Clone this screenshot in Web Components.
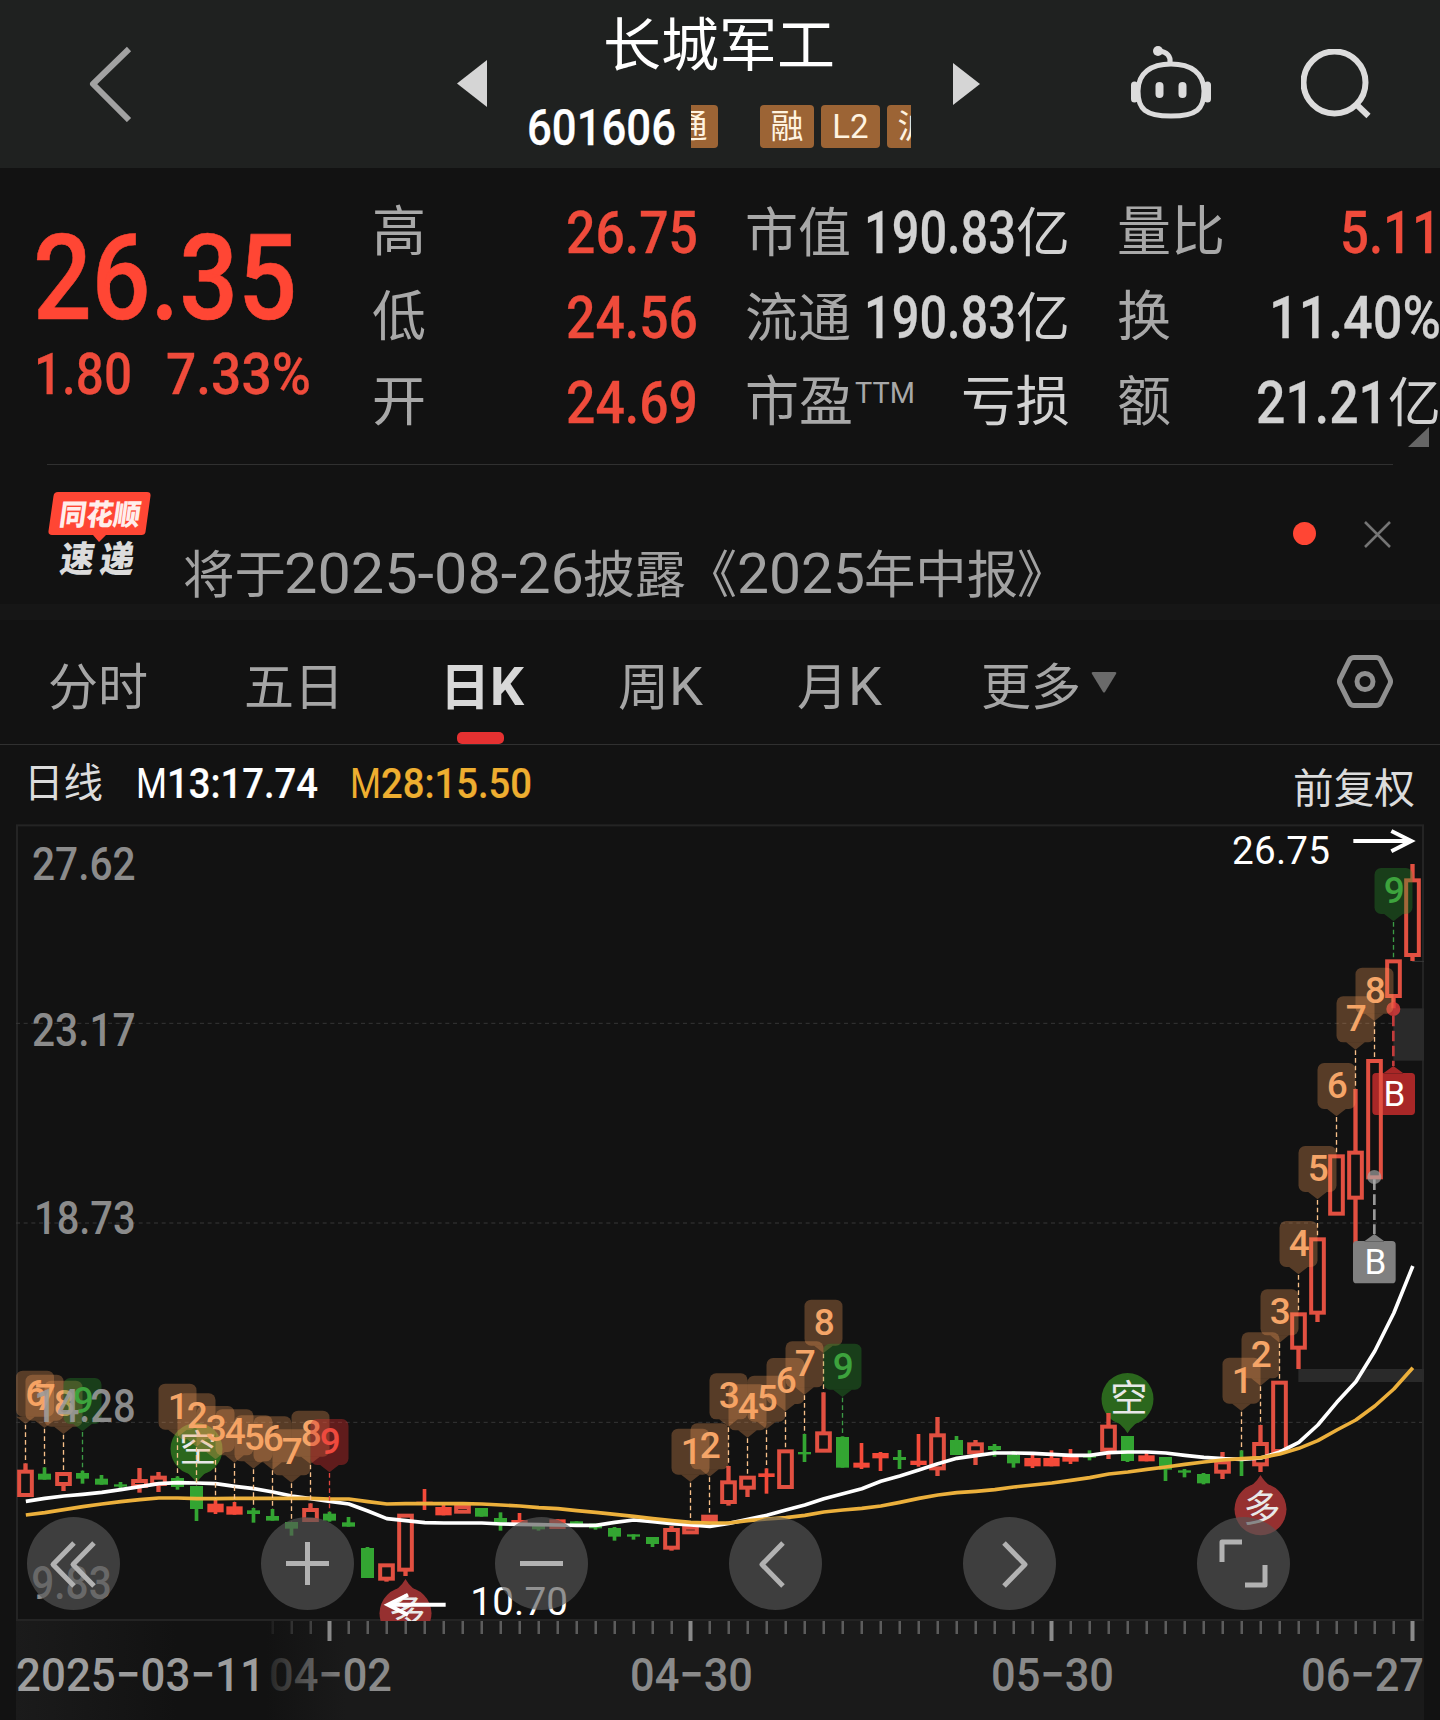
<!DOCTYPE html>
<html lang="zh-CN">
<head>
<meta charset="utf-8">
<title>长城军工 601606</title>
<style>
body {
    margin: 0;
    background: #121212;
    font-family: Roboto, "Noto Sans CJK SC", sans-serif;
}
</style>
</head>
<body>
<stock-app></stock-app>

<script>
const FONT = 'Roboto, "Noto Sans CJK SC", sans-serif';

// Text stretched to a given width; the box is as tall as the capitals.
class FitText extends HTMLElement {
    connectedCallback() {
        const w = Number(this.getAttribute('w'));
        const size = Number(this.getAttribute('size'));
        const weight = this.getAttribute('weight') || 400;
        const cap = size * 0.711;
        const cjk = /[\u4e00-\u9fff]/.test(this.textContent);
        const outline = weight === '500' ? `stroke="currentColor" stroke-width="${size * 0.005}"` : '';
        this.attachShadow({ mode: 'open' }).innerHTML = `
        <style>
        :host {
            display: block;
            flex: none;
            width: ${w}px;
            height: ${cap}px;
        }
        svg {
            display: block;
            overflow: visible;
        }
        </style>
        <svg width="${w}" height="${cap}"><text y="${cjk ? cap + 1 : cap}" fill="currentColor" ${outline} font-size="${size}" font-weight="${weight}" textLength="${w}" lengthAdjust="spacingAndGlyphs">${this.textContent}</text></svg>
        `;
    }
}

class StockBadge extends HTMLElement {
    constructor() {
        super();
        this.attachShadow({ mode: 'open' }).innerHTML = `
        <style>
        :host {
            display: flex;
            flex: none;
            align-items: center;
            justify-content: center;
            width: 54px;
            height: 43px;
            border-radius: 4px;
            background: #9c6435;
            color: #fff3e0;
            font-size: 33px;
            line-height: 43px;
        }
        </style>
        <slot></slot>
        `;
    }
}

class StockHeader extends HTMLElement {
    constructor() {
        super();
        this.attachShadow({ mode: 'open' }).innerHTML = `
        <style>
        :host {
            display: flex;
            box-sizing: border-box;
            height: 168px;
            padding-left: 89px;
            background: #1f2120;
            color: #fff;
        }
        svg { display: block; flex: none; }
        .back { margin: 46px 325px 0 0; }
        .prev { margin: 60px 40px 0 0; }
        .next { margin: 63px 151px 0 42px; }
        .robot { margin: 45px 90px 0 0; }
        .search { margin-top: 49px; }
        .center {
            display: flex;
            flex-direction: column;
            width: 384px;
        }
        .name {
            height: 84px;
            margin-top: 4px;
            text-align: center;
            font-size: 58px;
            line-height: 84px;
        }
        .row {
            display: flex;
            align-items: center;
            height: 43px;
            margin-top: 17px;
        }
        .badges {
            display: flex;
            width: 220px;
            margin-left: 15px;
            overflow: hidden;
        }
        .cut { margin: 0 42px 0 -27px; }
        .wide { width: 59px; margin: 0 7px; }
        .wide, .cut { flex: none; }
        </style>
        <svg class="back" width="43" height="76" fill="none" stroke="#a2a2a2" stroke-width="6"><path d="M40 3 4 38l36 36" stroke-linejoin="round"/></svg>
        <svg class="prev" width="30" height="47"><path d="M30 0v47L0 23.500z" fill="#d5d5d5"/></svg>
        <div class="center">
            <div class="name">长城军工</div>
            <div class="row">
                <fit-text w="149" size="50" weight="500">601606</fit-text>
                <div class="badges">
                    <stock-badge class="cut">通</stock-badge>
                    <stock-badge>融</stock-badge>
                    <stock-badge class="wide">L2</stock-badge>
                    <stock-badge>沪</stock-badge>
                </div>
            </div>
        </div>
        <svg class="next" width="27" height="43"><path d="M0 0v42l27-21z" fill="#d5d5d5"/></svg>
        <svg class="robot" width="80" height="75" fill="none" stroke="#dcdcdc" stroke-width="5">
            <path d="M40 19C60 19 73 28 73 46S66 71 40 71 7 64 7 46 20 19 40 19z"/>
            <path d="M39 18C40 11 36 7 28 6" />
            <circle cx="27" cy="6" r="5" fill="#dcdcdc" stroke="none"/>
            <path d="M3.500 40v14M76.500 40v14" stroke-width="7" stroke-linecap="round"/>
            <path d="M28.500 41v8M51.500 41v8" stroke-width="8" stroke-linecap="round"/>
        </svg>
        <svg class="search" width="70" height="70" fill="none" stroke="#dcdcdc" stroke-width="6">
            <circle cx="33.500" cy="33.500" r="31"/>
            <path d="M55.500 55.500 67.500 67"/>
        </svg>
        `;
    }
}

// One label / value pair. The value goes into the default slot.
class QuoteCell extends HTMLElement {
    constructor() {
        super();
        this.attachShadow({ mode: 'open' }).innerHTML = `
        <style>
        :host {
            display: flex;
            align-items: center;
            justify-content: space-between;
            height: 85px;
            color: #d2d2d2;
        }
        .label, .value {
            display: flex;
            align-items: center;
        }
        .label { color: #a8a8a8; }
        :host([up]) .value { color: #ef4b3b; }
        </style>
        <div class="label"><slot name="label"></slot></div>
        <div class="value"><slot></slot></div>
        `;
    }
}

class QuotePanel extends HTMLElement {
    constructor() {
        super();
        this.attachShadow({ mode: 'open' }).innerHTML = `
        <style>
        :host {
            display: grid;
            grid-template-columns: 292px 326px 325px 324px;
            column-gap: 47px;
            position: relative;
            box-sizing: border-box;
            height: 297px;
            padding: 21px 0 0 33px;
        }
        .price { color: #ff4634; padding-top: 46px; }
        .change {
            display: flex;
            gap: 34px;
            margin: 34px 0 0 1px;
            color: #ef4b3b;
        }
        .ttm { margin: -18px 0 0 2px; }
        .rule {
            position: absolute;
            left: 47px;
            right: 47px;
            bottom: 0;
            height: 1px;
            background: #303030;
        }
        .corner {
            position: absolute;
            right: 11px;
            bottom: 18px;
        }
        </style>
        <div class="price">
            <fit-text w="264" size="118" weight="500">26.35</fit-text>
            <div class="change">
                <fit-text w="98" size="58" weight="500">1.80</fit-text>
                <fit-text w="145" size="58" weight="500">7.33%</fit-text>
            </div>
        </div>
        <div>
            <quote-cell up><fit-text slot="label" w="54" size="54">高</fit-text><fit-text w="132" size="59" weight="500">26.75</fit-text></quote-cell>
            <quote-cell up><fit-text slot="label" w="54" size="54">低</fit-text><fit-text w="132" size="59" weight="500">24.56</fit-text></quote-cell>
            <quote-cell up><fit-text slot="label" w="54" size="54">开</fit-text><fit-text w="132" size="59" weight="500">24.69</fit-text></quote-cell>
        </div>
        <div>
            <quote-cell><fit-text slot="label" w="106" size="53">市值</fit-text><fit-text w="152" size="59" weight="500">190.83</fit-text><fit-text w="54" size="53">亿</fit-text></quote-cell>
            <quote-cell><fit-text slot="label" w="106" size="53">流通</fit-text><fit-text w="152" size="59" weight="500">190.83</fit-text><fit-text w="54" size="53">亿</fit-text></quote-cell>
            <quote-cell><fit-text slot="label" w="108" size="54">市盈</fit-text><fit-text slot="label" class="ttm" w="60" size="29">TTM</fit-text><fit-text w="109" size="54">亏损</fit-text></quote-cell>
        </div>
        <div>
            <quote-cell up><fit-text slot="label" w="108" size="54">量比</fit-text><fit-text w="101" size="59" weight="500">5.11</fit-text></quote-cell>
            <quote-cell><fit-text slot="label" w="54" size="54">换</fit-text><fit-text w="172" size="59" weight="500">11.40%</fit-text></quote-cell>
            <quote-cell><fit-text slot="label" w="54" size="54">额</fit-text><fit-text w="132" size="59" weight="500">21.21</fit-text><fit-text w="53" size="53">亿</fit-text></quote-cell>
        </div>
        <svg class="corner" width="21" height="20"><path d="M21 0v20H0z" fill="#666"/></svg>
        <div class="rule"></div>
        `;
    }
}

class NewsStrip extends HTMLElement {
    constructor() {
        super();
        this.attachShadow({ mode: 'open' }).innerHTML = `
        <style>
        :host {
            display: flex;
            box-sizing: border-box;
            height: 155px;
            padding: 27px 49px 0 48px;
            border-bottom: 16px solid #161616;
            font-family: ${FONT};
        }
        svg { display: block; flex: none; overflow: visible; }
        .line { margin: 53px 250px 0 34px; }
        .dot {
            flex: none;
            width: 23px;
            height: 23px;
            margin: 30px 48px 0 0;
            border-radius: 50%;
            background: #ff4634;
        }
        .close { margin-top: 29px; }
        </style>
        <svg width="103" height="88">
            <path d="M10 0h89q4 0 3.500 4l-5 36q-.5 3-4 3H58l-7 7-6-7H4q-4 0-3.500-4l5-35q.5-4 4.500-4z" fill="#ff4634"/>
            <g transform="skewX(-8)" font-weight="900">
                <text x="15" y="33" font-size="29" textLength="81" lengthAdjust="spacingAndGlyphs" fill="#ffeeec">同花顺</text>
                <text x="22" y="80" font-size="36" textLength="34" lengthAdjust="spacingAndGlyphs" fill="#dcdcdc">速</text>
                <text x="62" y="80" font-size="36" textLength="34" lengthAdjust="spacingAndGlyphs" fill="#dcdcdc">递</text>
            </g>
        </svg>
        <svg class="line" width="858" height="52" fill="#a2a2a2" font-size="51">
            <text y="47.500"><tspan x="-2" textLength="103" lengthAdjust="spacingAndGlyphs">将于</tspan><tspan x="99" font-size="55" textLength="300" lengthAdjust="spacingAndGlyphs">2025-08-26</tspan><tspan x="398" textLength="103" lengthAdjust="spacingAndGlyphs">披露</tspan><tspan x="501">《</tspan><tspan x="552" font-size="55" textLength="128" lengthAdjust="spacingAndGlyphs">2025</tspan><tspan x="679" textLength="154" lengthAdjust="spacingAndGlyphs">年中报</tspan><tspan x="832">》</tspan></text>
        </svg>
        <div class="dot"></div>
        <svg class="close" width="27" height="27" stroke="#757575" stroke-width="2.500"><path d="M1 1l25 25M26 1 1 26"/></svg>
        `;
    }
}

class PeriodTab extends HTMLElement {
    constructor() {
        super();
        this.attachShadow({ mode: 'open' }).innerHTML = `
        <style>
        :host {
            display: flex;
            flex: none;
            flex-direction: column;
            align-items: center;
            justify-content: space-between;
            height: 124px;
            color: #a5a5a5;
        }
        .label {
            display: flex;
            align-items: center;
            height: 38px;
            padding-top: 47px;
        }
        .bar { width: 47px; height: 12px; margin-right: 4px; border-radius: 5px; }
        :host([active]) { color: #d8d8d8; }
        :host([active]) .bar { background: #e53131; }
        </style>
        <div class="label"><slot></slot></div>
        <div class="bar"></div>
        `;
    }
}

class PeriodTabs extends HTMLElement {
    constructor() {
        super();
        this.attachShadow({ mode: 'open' }).innerHTML = `
        <style>
        :host {
            display: flex;
            align-items: flex-start;
            height: 124px;
            padding-left: 48px;
            border-bottom: 1px solid #303030;
        }
        .arrow { margin: -8px 0 0 10px; }
        .gear { display: block; margin: 35px 0 0 220px; }
        </style>
        <period-tab><fit-text w="100" size="50">分时</fit-text></period-tab>
        <period-tab style="margin-left: 96px"><fit-text w="100" size="50">五日</fit-text></period-tab>
        <period-tab style="margin-left: 96px" active><fit-text w="50" size="50" weight="700">日</fit-text><fit-text w="34" size="54" weight="700">K</fit-text></period-tab>
        <period-tab style="margin-left: 94px"><fit-text w="51" size="50">周</fit-text><fit-text w="34" size="54">K</fit-text></period-tab>
        <period-tab style="margin-left: 94px"><fit-text w="51" size="50">月</fit-text><fit-text w="34" size="54">K</fit-text></period-tab>
        <period-tab style="margin-left: 99px"><fit-text w="100" size="50">更多</fit-text><svg class="arrow" width="26" height="21"><path d="M2 0h22q2 0 1 2L14 20q-1 1-2 0L1 2q-1-2 1-2z" fill="#6a6a6a"/></svg></period-tab>
        <svg class="gear" width="56" height="53" fill="none" stroke="#8f8f8f" stroke-width="5">
            <path d="M17 2.500h22q3 0 4.500 2.500l9 18q2 3.500 0 7l-9 18q-1.500 2.500-4.500 2.500H17q-3 0-4.500-2.500l-9-18q-2-3.500 0-7l9-18Q14 2.500 17 2.500z"/>
            <circle cx="28" cy="26.500" r="8"/>
        </svg>
        `;
    }
}

class IndicatorBar extends HTMLElement {
    constructor() {
        super();
        this.attachShadow({ mode: 'open' }).innerHTML = `
        <style>
        :host {
            display: flex;
            align-items: flex-start;
            box-sizing: border-box;
            height: 79px;
            padding: 23px 25px 0 24px;
            color: #fff;
        }
        .name { margin-right: 33px; color: #dcdcdc; }
        .m28 { display: flex; margin-left: 32px; color: #eeae30; }
        .adj { margin: 5px 0 0 auto; color: #dcdcdc; }
        </style>
        <fit-text class="name" w="79" size="40">日线</fit-text>
        <fit-text w="31" size="42">M</fit-text><fit-text w="151" size="42" weight="500">13:17.74</fit-text>
        <div class="m28"><fit-text w="31" size="42">M</fit-text><fit-text w="151" size="42" weight="500">28:15.50</fit-text></div>
        <fit-text class="adj" w="122" size="41">前复权</fit-text>
        `;
    }
}

// Chart units are a third of a pixel, measured from the top left of the plot.
const STEP = 57;
const candleX = i => 76.5 + i * STEP;

// kind (h = hollow red, f = filled red, g = green), body top, body bottom, high, low
const CANDLES = [
    ['h', 1938, 2018, 1918, 2018], ['g', 1949, 1967, 1930, 1967], ['h', 1945, 1985, 1945, 2001],
    ['g', 1947, 1964, 1940, 1979], ['g', 1964, 1982, 1953, 1982], ['g', 1981, 1988, 1974, 1995],
    ['h', 1966, 1991, 1932, 2006], ['h', 1956, 1985, 1944, 2004], ['g', 1962, 1989, 1957, 1997],
    ['g', 1986, 2055, 1986, 2091], ['f', 2039, 2065, 2024, 2070], ['f', 2047, 2072, 2034, 2072],
    ['g', 2059, 2070, 2052, 2096], ['g', 2076, 2090, 2055, 2090], ['g', 2094, 2114, 2094, 2135],
    ['h', 2053, 2093, 2038, 2093], ['g', 2069, 2090, 2063, 2093], ['g', 2095, 2108, 2079, 2108],
    ['g', 2172, 2262, 2169, 2262], ['h', 2219, 2269, 2219, 2273], ['h', 2070, 2242, 2070, 2256],
    ['f', 2033, 2042, 1995, 2058], ['f', 2049, 2074, 2041, 2074], ['h', 2044, 2068, 2044, 2068],
    ['g', 2052, 2078, 2052, 2078], ['g', 2082, 2096, 2065, 2120], ['f', 2088, 2101, 2067, 2101],
    ['g', 2106, 2116, 2106, 2120], ['f', 2086, 2115, 2086, 2115], ['g', 2092, 2101, 2092, 2101],
    ['g', 2099, 2113, 2099, 2117], ['g', 2112, 2138, 2109, 2150], ['g', 2131, 2138, 2131, 2147],
    ['g', 2139, 2160, 2139, 2169], ['h', 2113, 2176, 2106, 2180], ['h', 2106, 2130, 2092, 2130],
    ['h', 2073, 2093, 2073, 2093], ['h', 1970, 2039, 1926, 2045], ['h', 1956, 1996, 1956, 2019],
    ['f', 1948, 1959, 1933, 2009], ['h', 1877, 1994, 1877, 1994], ['g', 1884, 1891, 1830, 1914],
    ['h', 1823, 1885, 1705, 1885], ['g', 1839, 1931, 1837, 1931], ['f', 1916, 1931, 1857, 1935],
    ['f', 1887, 1903, 1884, 1941], ['g', 1899, 1908, 1878, 1935], ['f', 1910, 1923, 1830, 1928],
    ['h', 1829, 1938, 1779, 1956], ['g', 1848, 1893, 1836, 1893], ['h', 1856, 1890, 1848, 1923],
    ['g', 1866, 1878, 1860, 1898], ['g', 1893, 1918, 1881, 1931], ['f', 1902, 1927, 1891, 1932],
    ['f', 1902, 1927, 1879, 1927], ['f', 1891, 1913, 1875, 1920], ['g', 1893, 1901, 1879, 1909],
    ['h', 1803, 1882, 1767, 1905], ['g', 1836, 1911, 1836, 1914], ['f', 1894, 1912, 1886, 1912],
    ['g', 1899, 1937, 1899, 1971], ['g', 1939, 1946, 1935, 1960], ['g', 1950, 1978, 1947, 1981],
    ['h', 1910, 1948, 1884, 1965], ['g', 1904, 1906, 1879, 1956], ['h', 1855, 1926, 1803, 1944],
    ['h', 1671, 1886, 1671, 1886], ['h', 1466, 1576, 1466, 1635], ['h', 1241, 1471, 1241, 1494],
    ['h', 992, 1174, 992, 1174], ['h', 981, 1126, 795, 1268], ['h', 706, 1065, 706, 1065],
    ['h', 407, 521, 407, 553], ['h', 164, 398, 120, 411]
];

const MA13 = [
    2032, 2023, 2016, 2011, 2005, 1997, 1988, 1979, 1976, 1977, 1979, 1987, 1994, 2004, 2016,
    2024, 2032, 2040, 2061, 2084, 2090, 2096, 2097, 2097, 2097, 2100, 2101, 2102, 2103, 2104,
    2104, 2095, 2088, 2093, 2099, 2103, 2107, 2098, 2086, 2074, 2058, 2043, 2024, 2009, 1994,
    1972, 1956, 1938, 1919, 1903, 1895, 1887, 1887, 1888, 1891, 1894, 1894, 1886, 1884, 1884,
    1887, 1894, 1900, 1904, 1906, 1902, 1884, 1855, 1803, 1735, 1673, 1581, 1467, 1326
];

const MA28 = [
    2073, 2066, 2057, 2048, 2040, 2033, 2027, 2022, 2022, 2024, 2024, 2023, 2023, 2023, 2023,
    2023, 2025, 2025, 2033, 2040, 2039, 2039, 2039, 2039, 2040, 2043, 2046, 2051, 2054, 2060,
    2065, 2071, 2077, 2084, 2090, 2095, 2097, 2097, 2090, 2085, 2081, 2074, 2064, 2058, 2053,
    2046, 2035, 2023, 2013, 2006, 2002, 1997, 1989, 1983, 1977, 1969, 1961, 1950, 1944, 1936,
    1929, 1921, 1914, 1908, 1904, 1901, 1890, 1873, 1850, 1818, 1788, 1746, 1695, 1631
];

// candle index, digit, colour set
const TAGS = [
    [0, 6], [1, 7], [2, 8], [3, 9, 'green'],
    [8, 1], [9, 2], [10, 3], [11, 4], [12, 5], [13, 6], [14, 7], [15, 8], [16, 9, 'red'],
    [35, 1], [36, 2], [37, 3], [38, 4], [39, 5], [40, 6], [41, 7], [42, 8], [43, 9, 'green'],
    [64, 1], [65, 2], [66, 3], [67, 4], [68, 5], [69, 6], [70, 7], [71, 8], [72, 9, 'green']
];

const TAG_COLORS = {
    orange: ['rgba(247, 159, 91, .3)', '#f5a568', '#f8c08a'],
    green: ['rgba(40, 150, 45, .34)', '#3da33d', '#3b9a45'],
    red: ['rgba(215, 45, 45, .4)', '#ee4a3e', '#e0453d']
};

class KlineChart extends HTMLElement {
    constructor() {
        super();
        this.attachShadow({ mode: 'open' });
    }

    connectedCallback() {
        this.render();
    }

    candle([kind, top, bottom, high, low], i) {
        const x = candleX(i);
        const color = kind === 'g' ? '#33a532' : '#e25041';
        let out = '';
        if (kind === 'h') {
            out += `<rect x="${x - 19}" y="${top + 5}" width="38" height="${Math.max(bottom - top - 10, 2)}" fill="none" stroke="${color}" stroke-width="12"/>`;
            if (high < top) out += `<rect x="${x - 6.5}" y="${high}" width="13" height="${top - high + 2}" fill="${color}"/>`;
            if (low > bottom) out += `<rect x="${x - 6.5}" y="${bottom - 2}" width="13" height="${low - bottom + 2}" fill="${color}"/>`;
            return out;
        }
        const half = kind === 'g' ? 19.5 : 24.5;
        const fill = kind === 'g' ? color : '#f44a39';
        if (bottom - top > 3) out += `<rect x="${x - half}" y="${top}" width="${half * 2}" height="${bottom - top}" fill="${fill}"/>`;
        out += `<rect x="${x - 5.5}" y="${high}" width="11" height="${low - high}" fill="${fill}"/>`;
        return out;
    }

    average(values, color) {
        const points = values.map((y, i) => `${candleX(i) + 1},${y}`).join(' ');
        return `<polyline points="${points}" fill="none" stroke="${color}" stroke-width="11" stroke-linejoin="round"/>`;
    }

    tag([i, digit, set]) {
        const [bg, fg, line] = TAG_COLORS[set || 'orange'];
        const x = candleX(i);
        const [kind, bodyTop, , high] = CANDLES[i];
        const tip = high - (kind === 'h' && bodyTop === high ? 115 : 118);
        const top = tip - 160;
        const left = Math.max(x - 57, 48);
        return `
        <path d="M${x} ${tip + 2}V${high}" stroke="${line}" stroke-width="4" stroke-dasharray="14 9"/>
        <rect x="${left}" y="${top}" width="114" height="138" rx="20" fill="${bg}"/>
        <path d="M${x - 28} ${top + 138}h56L${x} ${tip}z" fill="${bg}"/>
        <text x="${left + 59}" y="${top + 105}" font-size="111" font-weight="500" text-anchor="middle" fill="${fg}">${digit}</text>`;
    }

    pin(i, cy, char, up) {
        const x = candleX(i);
        const s = up ? -1 : 1;
        const color = up ? '#963030' : '#2b671d';
        return `
        <circle cx="${x}" cy="${cy}" r="78" fill="${color}"/>
        <path d="M${x - 58} ${cy + s * 50}Q${x - 15} ${cy + s * 75} ${x} ${cy + s * 103}Q${x + 15} ${cy + s * 75} ${x + 58} ${cy + s * 50}z" fill="${color}"/>
        <text x="${x + 4}" y="${cy + 38}" font-size="112" text-anchor="middle" fill="#e8e8e8">${char}</text>`;
    }

    render() {
        this.shadowRoot.innerHTML = `
        <style>
        :host {
            display: block;
            position: relative;
            height: 797px;
            overflow: hidden;
        }
        svg { display: block; font-family: ${FONT}; }
        .tools {
            position: absolute;
            left: 27px;
            right: 150px;
            bottom: 11px;
            display: flex;
            justify-content: space-between;
        }
        </style>
        <svg width="1440" height="797" viewBox="0 0 4320 2391">
            <rect x="51" y="4" width="4218" height="2384" fill="none" stroke="#242424" stroke-width="6"/>
            <path d="M48 598H4266M48 1197H4266M48 1795H4266" stroke="#363636" stroke-width="3" stroke-dasharray="12 11"/>
            <rect x="4180" y="553" width="92" height="157" fill="#2a2a2a"/>
            <rect x="3895" y="1635" width="377" height="39" fill="#2a2a2a"/>
            <path d="M4237 412h35" stroke="#3a3a3a" stroke-width="3"/>

            ${this.pin(9, 1875, '空')}
            ${this.pin(58, 1725, '空')}
            ${this.pin(65, 2056, '多', true)}
            ${this.pin(20, 2368, '多', true)}

            <path d="M4180 726l-30 22h60zM4128 747h106q11 0 11 11v104q0 11-11 11h-106q-11 0-11-11V758q0-11 11-11z" fill="#a82727"/>
            ${CANDLES.map((c, i) => this.candle(c, i)).join('')}
            <path d="M4180 575V726" stroke="#c23b3b" stroke-width="8" stroke-dasharray="32 13"/>
            <circle cx="4180" cy="555" r="21" fill="#e23c3c" opacity=".8"/>
            <text x="4183" y="845" font-size="105" text-anchor="middle" fill="#fff">B</text>

            <path d="M4123 1066V1230" stroke="#999" stroke-width="8" stroke-dasharray="32 13"/>
            <circle cx="4123" cy="1059" r="21" fill="#aaa" opacity=".65"/>
            <path d="M4123 1230l-30 22h60zM4070 1251h106q11 0 11 11v105q0 11-11 11h-106q-11 0-11-11v-105q0-11 11-11z" fill="#808080"/>
            <text x="4126" y="1349" font-size="105" text-anchor="middle" fill="#fff">B</text>

            ${this.average(MA13, '#fff')}
            ${this.average(MA28, '#ecb03c')}
            ${TAGS.map(t => this.tag(t)).join('')}

            <g fill="#9c9c9c" font-size="141" font-weight="500" opacity=".88">
                <text x="96" y="167" textLength="311" lengthAdjust="spacingAndGlyphs">27.62</text>
                <text x="96" y="665" textLength="311" lengthAdjust="spacingAndGlyphs">23.17</text>
                <text x="102" y="1229" textLength="305" lengthAdjust="spacingAndGlyphs">18.73</text>
                <text x="102" y="1794" textLength="305" lengthAdjust="spacingAndGlyphs">14.28</text>
                <text x="94" y="2324" textLength="241" lengthAdjust="spacingAndGlyphs">9.83</text>
            </g>

            <g fill="none" stroke="#fff" stroke-width="12">
                <path d="M4060 51h174M4174 21l60 30-60 31"/>
                <path d="M1337 2342H1164M1224 2312l-60 30 60 31"/>
            </g>
            <g fill="#fff" font-size="116">
                <text x="3696" y="120" textLength="294" lengthAdjust="spacing">26.75</text>
                <text x="1411" y="2373" textLength="293" lengthAdjust="spacing">10.70</text>
            </g>
        </svg>
        <div class="tools">
            <chart-button><path d="M47 26 26 47.500 47 69M67 26 46 47.500 67 69"/></chart-button>
            <chart-button><path d="M25 46.500H68M46.500 25V68"/></chart-button>
            <chart-button><path d="M25 46.500H68"/></chart-button>
            <chart-button><path d="M54 26 33 47.500 54 69"/></chart-button>
            <chart-button><path d="M41 26 62 47.500 41 69"/></chart-button>
            <chart-button><path d="M25 45V25H45M68 48V68H48"/></chart-button>
        </div>
        `;
    }
}

// Round button; its child markup is the icon path.
class ChartButton extends HTMLElement {
    connectedCallback() {
        this.attachShadow({ mode: 'open' }).innerHTML = `
        <style>
        :host {
            display: block;
            width: 93px;
            height: 93px;
            border-radius: 50%;
            background: rgba(86, 86, 86, .65);
        }
        svg { display: block; }
        </style>
        <svg width="93" height="93" fill="none" stroke="#b2b2b2" stroke-width="5" stroke-linejoin="round">${this.innerHTML}</svg>
        `;
    }
}

class DateAxis extends HTMLElement {
    constructor() {
        super();
        let ticks = '';
        for (let i = 13; i < 74; i++) {
            const x = candleX(i) / 3;
            const major = (i - 16) % 19 === 0;
            ticks += major
                ? `<rect x="${x - 2}" y="0" width="4" height="20" fill="#8a8a8a"/>`
                : `<rect x="${x - 1}" y="0" width="2.500" height="13" fill="#5c5c5c" opacity="${i < 16 ? (i - 12) / 5 : 1}"/>`;
        }
        this.attachShadow({ mode: 'open' }).innerHTML = `
        <style>
        :host {
            display: block;
            height: 99px;
            margin: 0 16px;
            background: linear-gradient(90deg, #1b1b1b 0, #121212 160px, #121212 250px, #1a1a1a 330px);
        }
        svg { display: block; margin-left: -16px; font-family: ${FONT}; }
        </style>
        <svg width="1440" height="99">
            <defs>
                <linearGradient id="fade" gradientUnits="userSpaceOnUse" x1="265" x2="350" y1="0" y2="0">
                    <stop offset="0" stop-color="#222"/>
                    <stop offset="1" stop-color="#8a8a8a"/>
                </linearGradient>
            </defs>
            ${ticks}
            <g font-size="47" font-weight="500" fill="#8a8a8a">
                <text x="16" y="70" textLength="249" lengthAdjust="spacingAndGlyphs" fill="#9d9d9d">2025−03−11</text>
                <text x="269" y="70" textLength="123" lengthAdjust="spacingAndGlyphs" fill="url(#fade)">04−02</text>
                <text x="630" y="70" textLength="123" lengthAdjust="spacingAndGlyphs">04−30</text>
                <text x="991" y="70" textLength="123" lengthAdjust="spacingAndGlyphs">05−30</text>
                <text x="1301" y="70" textLength="123" lengthAdjust="spacingAndGlyphs">06−27</text>
            </g>
        </svg>
        `;
    }
}

class StockApp extends HTMLElement {
    constructor() {
        super();
        this.attachShadow({ mode: 'open' }).innerHTML = `
        <style>
        :host {
            display: block;
            width: 1440px;
            height: 1720px;
            overflow: hidden;
        }
        </style>
        <stock-header></stock-header>
        <quote-panel></quote-panel>
        <news-strip></news-strip>
        <period-tabs></period-tabs>
        <indicator-bar></indicator-bar>
        <kline-chart></kline-chart>
        <date-axis></date-axis>
        `;
    }
}

customElements.define('fit-text', FitText);
customElements.define('stock-badge', StockBadge);
customElements.define('stock-header', StockHeader);
customElements.define('quote-cell', QuoteCell);
customElements.define('quote-panel', QuotePanel);
customElements.define('news-strip', NewsStrip);
customElements.define('period-tab', PeriodTab);
customElements.define('period-tabs', PeriodTabs);
customElements.define('indicator-bar', IndicatorBar);
customElements.define('chart-button', ChartButton);
customElements.define('kline-chart', KlineChart);
customElements.define('date-axis', DateAxis);
customElements.define('stock-app', StockApp);
</script>
</body>
</html>
